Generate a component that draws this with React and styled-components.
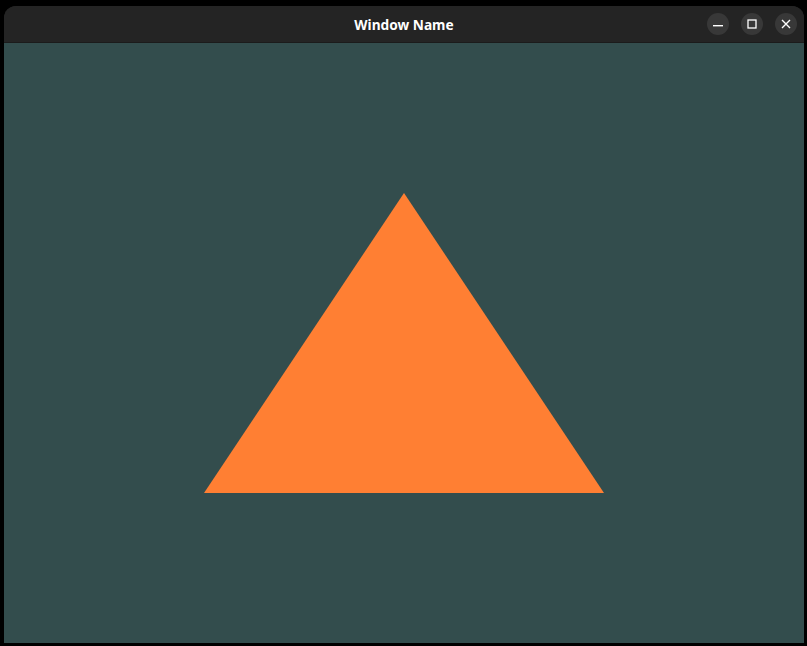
import React from "react";
import styled, { createGlobalStyle } from "styled-components";

const GlobalStyle = createGlobalStyle`
  html, body {
    margin: 0;
    padding: 0;
    background: #000;
  }
  body {
    font-family: "Noto Sans", "DejaVu Sans", sans-serif;
  }
`;

const Desktop = styled.div`
  width: 807px;
  height: 646px;
  padding: 6px 3px 3px 4px;
  box-sizing: border-box;
  background: #000;
`;

const Window = styled.div`
  width: 800px;
  display: flex;
  flex-direction: column;
  border-radius: 12px 12px 0 0;
  overflow: hidden;
  background: #242424;
`;

const TitleBar = styled.div`
  height: 36px;
  border-bottom: 1px solid #1b1b1b;
  display: grid;
  grid-template-columns: 1fr auto 1fr;
  align-items: center;
  background: #242424;
`;

const Title = styled.div`
  grid-column: 2;
  color: #ffffff;
  font-weight: 700;
  font-size: 13.7px;
  letter-spacing: 0;
  padding-top: 1px;
`;

const Controls = styled.div`
  grid-column: 3;
  justify-self: end;
  display: flex;
  gap: 12px;
  padding-right: 7px;
`;

const ControlButton = styled.button`
  width: 22px;
  height: 22px;
  border: none;
  padding: 0;
  border-radius: 50%;
  background: #383838;
  display: flex;
  align-items: center;
  justify-content: center;
  color: #ffffff;
`;

const Viewport = styled.div`
  width: 800px;
  height: 600px;
  background: #334d4d;
  display: block;
`;

const Canvas = styled.svg`
  display: block;
`;

const MinimizeIcon = () => (
  <svg width="12" height="12" viewBox="0 0 12 12">
    <rect x="1" y="7" width="10" height="1.4" fill="currentColor" />
  </svg>
);

const MaximizeIcon = () => (
  <svg width="12" height="12" viewBox="0 0 12 12">
    <rect x="2" y="2" width="8" height="8" fill="none" stroke="currentColor" strokeWidth="1.3" />
  </svg>
);

const CloseIcon = () => (
  <svg width="12" height="12" viewBox="0 0 12 12">
    <path d="M2 2 L10 10 M10 2 L2 10" stroke="currentColor" strokeWidth="1.4" />
  </svg>
);

export default function App() {
  return (
    <>
      <GlobalStyle />
      <Desktop>
        <Window>
          <TitleBar>
            <Title>Window Name</Title>
            <Controls>
              <ControlButton aria-label="Minimize">
                <MinimizeIcon />
              </ControlButton>
              <ControlButton aria-label="Maximize">
                <MaximizeIcon />
              </ControlButton>
              <ControlButton aria-label="Close">
                <CloseIcon />
              </ControlButton>
            </Controls>
          </TitleBar>
          <Viewport>
            <Canvas width="800" height="600" viewBox="0 0 800 600">
              <polygon points="200,450 600,450 400,150" fill="#ff7f33" />
            </Canvas>
          </Viewport>
        </Window>
      </Desktop>
    </>
  );
}
